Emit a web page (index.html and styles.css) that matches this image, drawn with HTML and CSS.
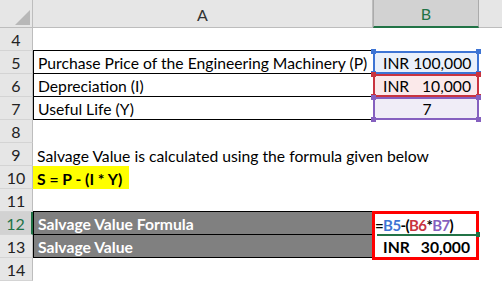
FILE: index.html
```html
<!DOCTYPE html>
<html>
<head>
<meta charset="utf-8">
<link rel="stylesheet" href="styles.css">
</head>
<body>
<div class="sheet">
  <div class="corner"><span class="tri"></span></div>
  <div class="ch a">A</div>
  <div class="ch b sel">B</div>
  <div class="ch c"></div>

  <div class="rh">4</div><div class="cell a line"></div><div class="cell b"></div><div class="cell c"></div>

  <div class="rh">5</div><div class="cell a line boxl">Purchase Price of the Engineering Machinery (P)</div>
  <div class="cell b rng blue"><span class="inr">INR</span><span class="num">100,000</span><i class="hd tl"></i><i class="hd tr"></i><i class="hd bl"></i><i class="hd br"></i></div>
  <div class="cell c"></div>

  <div class="rh">6</div><div class="cell a line boxl">Depreciation (I)</div>
  <div class="cell b rng red"><span class="inr">INR</span><span class="num">10,000</span><i class="hd tl"></i><i class="hd tr"></i><i class="hd bl"></i><i class="hd br"></i></div>
  <div class="cell c"></div>

  <div class="rh">7</div><div class="cell a line boxl">Useful Life (Y)</div>
  <div class="cell b rng purple center"><span>7</span><i class="hd tl"></i><i class="hd tr"></i><i class="hd bl"></i><i class="hd br"></i></div>
  <div class="cell c"></div>

  <div class="rh">8</div><div class="cell a"></div><div class="cell b"></div><div class="cell c"></div>

  <div class="rh">9</div><div class="cell a overflow">Salvage Value is calculated using the formula given below</div><div class="cell b"></div><div class="cell c"></div>

  <div class="rh">10</div><div class="cell a hl-cell"><span class="hl">S = P - (I * Y)</span></div><div class="cell b"></div><div class="cell c"></div>

  <div class="rh">11</div><div class="cell a line"></div><div class="cell b"></div><div class="cell c"></div>

  <div class="rh selrow">12</div><div class="cell a line dark">Salvage Value Formula</div>
  <div class="result">
    <div class="fx">=<span class="c1">B5</span>-(<span class="c2">B6</span>*<span class="c3">B7</span>)</div>
    <div class="gl"></div>
    <div class="val"><span>INR</span><span>30,000</span></div>
  </div>
  <div class="cell c"></div>

  <div class="rh">13</div><div class="cell a line dark">Salvage Value</div><div class="cell c"></div>

  <div class="rh">14</div><div class="cell a"></div><div class="cell b"></div><div class="cell c"></div>
</div>
</body>
</html>
```
FILE: styles.css
```css
* { box-sizing: border-box; }
html, body { margin: 0; padding: 0; background: #fff; }
body {
  font-family: Lato, "Liberation Sans", sans-serif;
  font-size: 15.7px;
  color: #000;
  width: 502px;
  height: 281px;
  overflow: hidden;
}
.sheet {
  display: grid;
  grid-template-columns: 33px 340px 106px 23px;
  grid-template-rows: 28px repeat(11, 23px);
}
.corner {
  grid-column: 1;
  background: #e6e6e6;
  border-right: 1px solid #bdbdbd;
  border-bottom: 1px solid #bdbdbd;
  position: relative;
}
.tri {
  position: absolute;
  left: 15px;
  top: 10px;
  width: 15px;
  height: 15px;
  background: #b8b8b8;
  clip-path: polygon(100% 0, 100% 100%, 0 100%);
}
.ch {
  background: #e6e6e6;
  border-right: 1px solid #bdbdbd;
  border-bottom: 1px solid #bdbdbd;
  display: flex;
  align-items: center;
  justify-content: center;
  color: #333;
  font-size: 16px;
  padding-top: 1px;
}
.ch.sel {
  background: #d2d2d2;
  color: #217346;
  border-bottom: 2px solid #217346;
  border-right-color: #ababab;
  border-left: 1px solid #ababab;
}
.ch.c { border-right: none; }
.a { grid-column: 2; }
.b { grid-column: 3; }
.c { grid-column: 4; }
.rh {
  grid-column: 1;
  background: #e6e6e6;
  border-right: 1px solid #bdbdbd;
  border-bottom: 1px solid #d4d4d4;
  display: flex;
  align-items: center;
  justify-content: center;
  color: #222;
  font-size: 16px;
  padding-top: 1px;
}
.rh.selrow {
  background: #d2d2d2;
  color: #217346;
  border-right: 2px solid #217346;
}
.cell {
  display: flex;
  align-items: center;
  padding: 2px 4px 0 4px;
  white-space: nowrap;
  min-width: 0;
}
.cell.line { border-bottom: 1px solid #000; }
.cell.boxl { border-left: 1px solid #000; padding-left: 4px; }
.cell.overflow { overflow: visible; position: relative; z-index: 2; }
.cell.dark {
  background: #808080;
  color: #fff;
  font-weight: bold;
  border-left: 1px solid #000;
}
.hl-cell { padding: 0; }
.hl {
  background: #ffff00;
  font-weight: bold;
  height: 100%;
  display: flex;
  align-items: center;
  padding: 2px 7px 0 4px;
}
.rng {
  position: relative;
  border: 2px solid;
  justify-content: space-between;
  gap: 4px;
  padding: 1px 6px 0 8px;
}
.rng.center { justify-content: center; }
.blue { border-color: #3d74d4; background: #e9f0fb; }
.red { border-color: #c9343f; background: #fbe9ea; }
.purple { border-color: #8560bf; background: #f0edf7; }
.hd {
  position: absolute;
  width: 5px;
  height: 5px;
}
.blue .hd { background: #3d74d4; }
.red .hd { background: #c9343f; }
.purple .hd { background: #8560bf; }
.hd.tl { top: -4px; left: -4px; }
.hd.tr { top: -4px; right: -4px; }
.hd.bl { bottom: -4px; left: -4px; }
.hd.br { bottom: -4px; right: -4px; }
.result {
  grid-column: 3;
  grid-row: span 2;
  margin: -1px 0 -2px -1px;
  border: 3px solid #ff0000;
  display: flex;
  flex-direction: column;
  font-weight: bold;
  position: relative;
  z-index: 3;
  background: #fff;
}
.fx {
  height: 20px;
  display: flex;
  align-items: center;
  padding: 1px 0 0 0;
  white-space: nowrap;
  font-size: 15px;
  letter-spacing: -0.6px;
}
.c1 { color: #3d74d4; }
.c2 { color: #c9343f; }
.c3 { color: #8560bf; }
.gl {
  height: 2px;
  background: #217346;
  margin: 0 0 0 2px;
  position: relative;
}
.gl::after {
  content: "";
  position: absolute;
  right: -4px;
  top: -2px;
  width: 4px;
  height: 5px;
  background: #217346;
}
.val {
  flex: 1;
  display: flex;
  align-items: center;
  justify-content: space-between;
  padding: 1px 6px 0 8px;
}
```
